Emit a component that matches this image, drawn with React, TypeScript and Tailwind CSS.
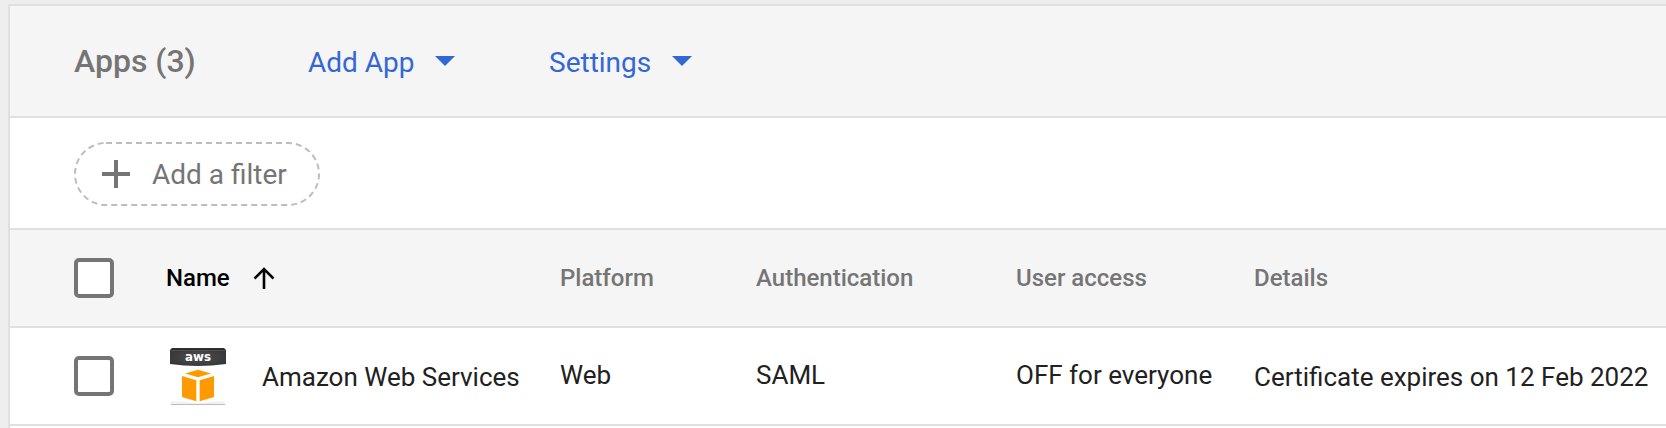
const columns = ["Platform", "Authentication", "User access", "Details"];

function Checkbox() {
  return (
    <div className="flex w-[92px] shrink-0 items-center">
      <div className="size-10 rounded-[5px] border-4 border-[#757575] bg-white" />
    </div>
  );
}

function MenuButton({ label }: { label: string }) {
  return (
    <button className="flex items-center text-[28px] leading-8 text-[#3367d6]">
      <span className="pt-1">{label}</span>
      <svg className="ml-[20.500px] h-[10px] w-5" viewBox="0 0 20 10" fill="currentColor">
        <path d="M0 0h20L10 10z" />
      </svg>
    </button>
  );
}

function AwsLogo() {
  return (
    <svg className="mt-[2px] h-[58px] w-14 shrink-0" viewBox="0 0 56 58">
      <defs>
        <radialGradient id="band" cx="50%" cy="50%" r="55%">
          <stop offset="0" stopColor="#505050" />
          <stop offset="1" stopColor="#373737" />
        </radialGradient>
      </defs>
      <path d="M2 0h52l2 2v14Q28 20 0 16V2z" fill="url(#band)" />
      <path d="M2 .5h52l1.5 1.5H.5z" fill="#2b2b2b" />
      <path d="M1 2.5h54" stroke="#555" strokeWidth=".8" />
      <text x="28" y="13.3" textAnchor="middle" textLength="26" lengthAdjust="spacingAndGlyphs" fontSize="12.5" fontWeight="700" fill="#fff" className="font-['DejaVu_Sans',sans-serif]">aws</text>
      <path d="M28 21.700l13 3.700-13 3.900-13-3.900zM12 28l14.300 4.300v21L12 49zM44 28l-14.300 4.300v21L44 49z" fill="#ff9900" />
      <path d="M1 53.500h10.500l14.500 1.500h4l14.500-1.500H55V56H1z" fill="#f1f1f1" />
      <path d="M1 56h54v1H1z" fill="#bcbcbc" />
    </svg>
  );
}

export default function App() {
  return (
    <div className="h-[428px] w-[1666px] overflow-hidden bg-[#eeeeee] pt-1 pl-2 font-[Roboto,sans-serif]">
      <div className="h-[424px] border-t-2 border-l-2 border-[#e0e0e0] bg-white">
        <div className="flex h-28 items-center border-b-2 border-[#e0e0e0] bg-[#f5f5f5] pl-16">
          <h1 className="w-[234px] text-[32px] leading-10 font-medium text-[#757575]">Apps (3)</h1>
          <div className="w-[241px]"><MenuButton label="Add App" /></div>
          <MenuButton label="Settings" />
        </div>

        <div className="flex h-28 items-center border-b-2 border-[#e0e0e0] pt-[2px] pl-16">
          <button className="flex h-16 w-[246px] items-center text-[28px] text-[#757575]">
            <svg className="h-16 w-[246px] shrink-0" viewBox="0 0 246 64" fill="none">
              <rect x="1" y="1" width="244" height="62" rx="31" stroke="#bdbdbd" strokeWidth="2" strokeDasharray="6 4" />
              <path d="M28 32h28M42 18v28" stroke="#757575" strokeWidth="4" />
            </svg>
            <span className="-ml-[168px] pt-[2px] whitespace-nowrap">Add a filter</span>
          </button>
        </div>

        <div className="flex h-[98px] items-center border-b-2 border-[#e0e0e0] bg-[#f5f5f5] pl-16 text-[24px] font-medium text-[#757575]">
          <Checkbox />
          <div className="flex w-[394px] shrink-0 items-center text-black">
            Name
            <svg className="ml-[23px] h-[22px] w-[22px]" viewBox="0 0 22 22" fill="none" stroke="currentColor" strokeWidth="2.6">
              <path d="M11 22V2M1.500 11.500L11 2l9.500 9.500" />
            </svg>
          </div>
          <div className="grid grid-cols-[196px_260px_238px_412px]">
            {columns.map((c) => <span key={c}>{c}</span>)}
          </div>
        </div>

        <div className="flex h-[98px] items-center border-b-2 border-[#e0e0e0] pl-16 text-[26px] whitespace-nowrap text-[#212121]">
          <Checkbox />
          <div className="flex w-[394px] shrink-0 items-center pl-1">
            <AwsLogo />
            <span className="ml-9 pt-[2px]">Amazon Web Services</span>
          </div>
          <div className="grid grid-cols-[196px_260px_238px_412px] items-center">
            <span className="pb-[2px]">Web</span>
            <span className="pb-[2px]">SAML</span>
            <span className="pb-[2px]">OFF for everyone</span>
            <span className="pt-[2px]">Certificate expires on 12 Feb 2022</span>
          </div>
        </div>
      </div>
    </div>
  );
}
